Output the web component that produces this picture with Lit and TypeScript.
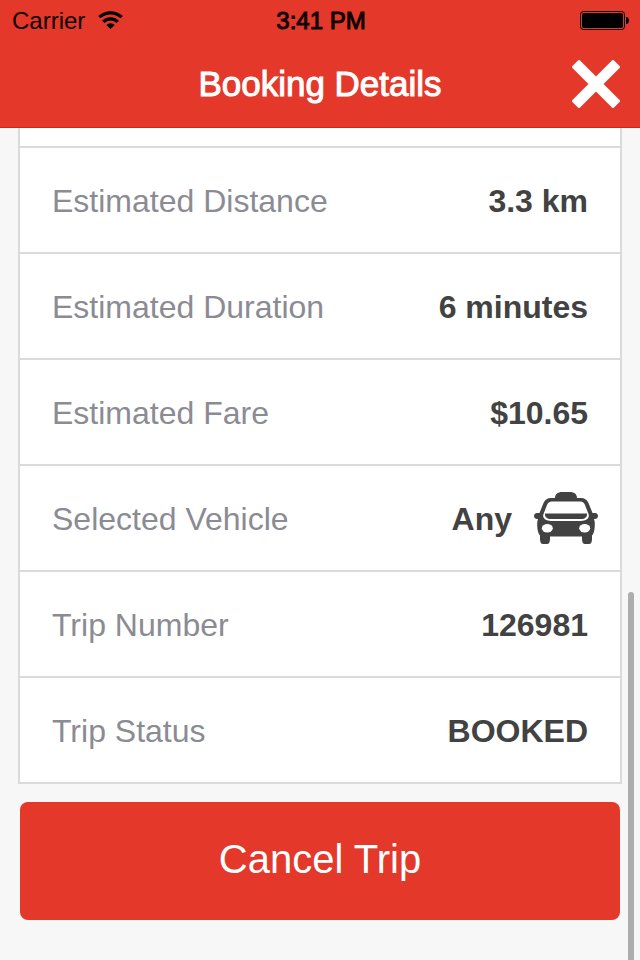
import { LitElement, html, css, svg, nothing } from "lit";
import { customElement, property } from "lit/decorators.js";

const taxiIcon = html`<svg class="taxi" viewBox="0 1 64 54" aria-hidden="true">
  ${svg`
    <path fill="#424242" fill-rule="evenodd" d="M21 7 C21 3 24 1 28 1 H36 C40 1 43 3 43 7 H46 C51 7 53 9 54.500 12 L58.500 22 H61 C65 22 65 28 61 28 H60 C61 31 61 33 60.500 38 C60 41 59.500 43 58 44.500 V48 C58 51 57 53 55 53 H51 C49 53 48 51 48 48 V45.500 H16 V48 C16 51 15 53 13 53 H9 C7 53 6 51 6 48 V44.500 C4.500 43 4 41 3.500 38 C3 33 3 31 4 28 H3 C-1 28 -1 22 3 22 H5.500 L9.500 12 C11 9 13 7 18 7 Z
      M18 10.500 C15 10.500 14 12 13 14 L9.500 23 C8 27 11.500 30 17 30 H47 C52.500 30 56 27 54.500 23 L51 14 C50 12 49 10.500 46 10.500 Z"/>
    <path fill="#424242" d="M11 22.500 H53 C53.500 26 51 28 47 28 H17 C13 28 10.500 26 11 22.500 Z"/>
    <ellipse fill="#fff" cx="13.300" cy="37.200" rx="5.500" ry="4.200"/>
    <ellipse fill="#fff" cx="50.700" cy="37.200" rx="5.500" ry="4.200"/>
  `}
</svg>`;

@customElement("status-bar")
export class StatusBar extends LitElement {
  static styles = css`
    :host {
      display: grid;
      grid-template-columns: 1fr auto 1fr;
      align-items: center;
      height: 40px;
      padding: 0 10px 0 12px;
      color: #0d0302;
      font-size: 24px;
      line-height: 32px;
    }
    .carrier {
      display: flex;
      align-items: center;
      gap: 13px;
    }
    .text {
      padding-top: 2px;
    }
    .wifi {
      width: 26px;
      height: 20px;
    }
    .time {
      -webkit-text-stroke: 1px currentColor;
    }
    .battery {
      justify-self: end;
      width: 50px;
      height: 20px;
    }
  `;

  render() {
    return html`
      <span class="carrier">
        <span class="text">Carrier</span>
        <svg class="wifi" viewBox="0 0 26 20" role="img" aria-label="Wi-Fi">
          <g fill="none" stroke="#000" stroke-width="3.200">
            <path d="M1.300 7.200 A16.500 16.500 0 0 1 23.700 7.200" />
            <path d="M5.200 11.900 A10.500 10.500 0 0 1 19.800 11.900" />
          </g>
          <path d="M12.500 19 L8.300 14.900 A6 6 0 0 1 16.700 14.900 Z" />
        </svg>
      </span>
      <span class="text time">3:41 PM</span>
      <svg class="battery" viewBox="0 0 50 20" role="img" aria-label="Battery full">
        <rect x="0.500" y="1.500" width="44" height="18" rx="3" fill="none" stroke="#000" />
        <rect x="2" y="3" width="41" height="15" rx="2" />
        <path d="M46 7 C48 7 49 8.500 49 10.500 C49 12.500 48 14 46 14 Z" />
      </svg>
    `;
  }
}

@customElement("detail-row")
export class DetailRow extends LitElement {
  @property() label = "";
  @property() value = "";
  @property({ type: Boolean }) vehicle = false;

  static styles = css`
    :host {
      display: block;
      border-bottom: 2px solid #dadada;
    }
    .row {
      box-sizing: border-box;
      display: flex;
      align-items: center;
      justify-content: space-between;
      min-height: 104px;
      margin: 0;
      padding: 2px 32px 0;
      font-size: 32px;
      line-height: 40px;
    }
    .row.with-icon {
      padding-right: 22px;
    }
    .label {
      color: #8b8b94;
    }
    .value {
      display: flex;
      align-items: center;
      gap: 22px;
      margin: 0;
      color: #424242;
      font-weight: bold;
    }
    .taxi {
      width: 64px;
      height: 54px;
    }
  `;

  render() {
    return html`
      <dl class="row ${this.vehicle ? "with-icon" : ""}">
        <dt class="label">${this.label}</dt>
        <dd class="value">${this.value}${this.vehicle ? taxiIcon : nothing}</dd>
      </dl>
    `;
  }
}

@customElement("app-root")
export class AppRoot extends LitElement {
  static styles = css`
    :host {
      display: flex;
      flex-direction: column;
      min-height: 100vh;
      background: #f7f7f7;
      font-family: "Liberation Sans", Arial, sans-serif;
    }
    .top {
      background: #e3382a;
      border-bottom: 1px solid #cb2418;
    }
    .nav {
      display: grid;
      grid-template-columns: 1fr auto 1fr;
      align-items: center;
      height: 87px;
      padding: 0 20px;
    }
    .title {
      grid-column: 2;
      margin: 0;
      color: #fff;
      font-size: 35px;
      font-weight: normal;
      line-height: 40px;
      -webkit-text-stroke: 1px currentColor;
    }
    .close {
      justify-self: end;
      display: block;
      width: 48px;
      height: 48px;
      padding: 0;
      border: 0;
      background: none;
    }
    .cross {
      display: block;
      width: 48px;
      height: 48px;
    }
    .content {
      position: relative;
      flex: 1;
      padding: 0 18px 40px;
    }
    .list {
      border: 2px solid #dadada;
      border-width: 0 2px;
      background: #fff;
    }
    .previous {
      height: 18px;
      border-bottom: 2px solid #dadada;
    }
    .cancel {
      display: block;
      width: calc(100% - 4px);
      height: 118px;
      margin: 18px 2px 0;
      padding: 0 0 4px;
      border: 0;
      border-radius: 8px;
      background: #e3382a;
      color: #fff;
      font: 40px / 48px "Liberation Sans", Arial, sans-serif;
    }
    .thumb {
      position: absolute;
      top: 464px;
      right: 6px;
      bottom: 0;
      width: 6px;
      border-radius: 3px 3px 0 0;
      background: #adadad;
    }
  `;

  render() {
    return html`
      <header class="top">
        <status-bar></status-bar>
        <div class="nav">
          <h1 class="title">Booking Details</h1>
          <button class="close" type="button" aria-label="Close">
            <svg class="cross" viewBox="0 0 48 48" aria-hidden="true">
              <path
                d="M7 1.500 L24 18.500 L41 1.500 L46.500 7 L29.500 24 L46.500 41 L41 46.500 L24 29.500 L7 46.500 L1.500 41 L18.500 24 L1.500 7 Z"
                fill="#fff"
                stroke="#fff"
                stroke-width="3"
                stroke-linejoin="round"
              />
            </svg>
          </button>
        </div>
      </header>
      <main class="content">
        <div class="list">
          <div class="previous"></div>
          <detail-row label="Estimated Distance" value="3.3 km"></detail-row>
          <detail-row label="Estimated Duration" value="6 minutes"></detail-row>
          <detail-row label="Estimated Fare" value="$10.65"></detail-row>
          <detail-row label="Selected Vehicle" value="Any" vehicle></detail-row>
          <detail-row label="Trip Number" value="126981"></detail-row>
          <detail-row label="Trip Status" value="BOOKED"></detail-row>
        </div>
        <button class="cancel" type="button">Cancel Trip</button>
        <div class="thumb"></div>
      </main>
    `;
  }
}
